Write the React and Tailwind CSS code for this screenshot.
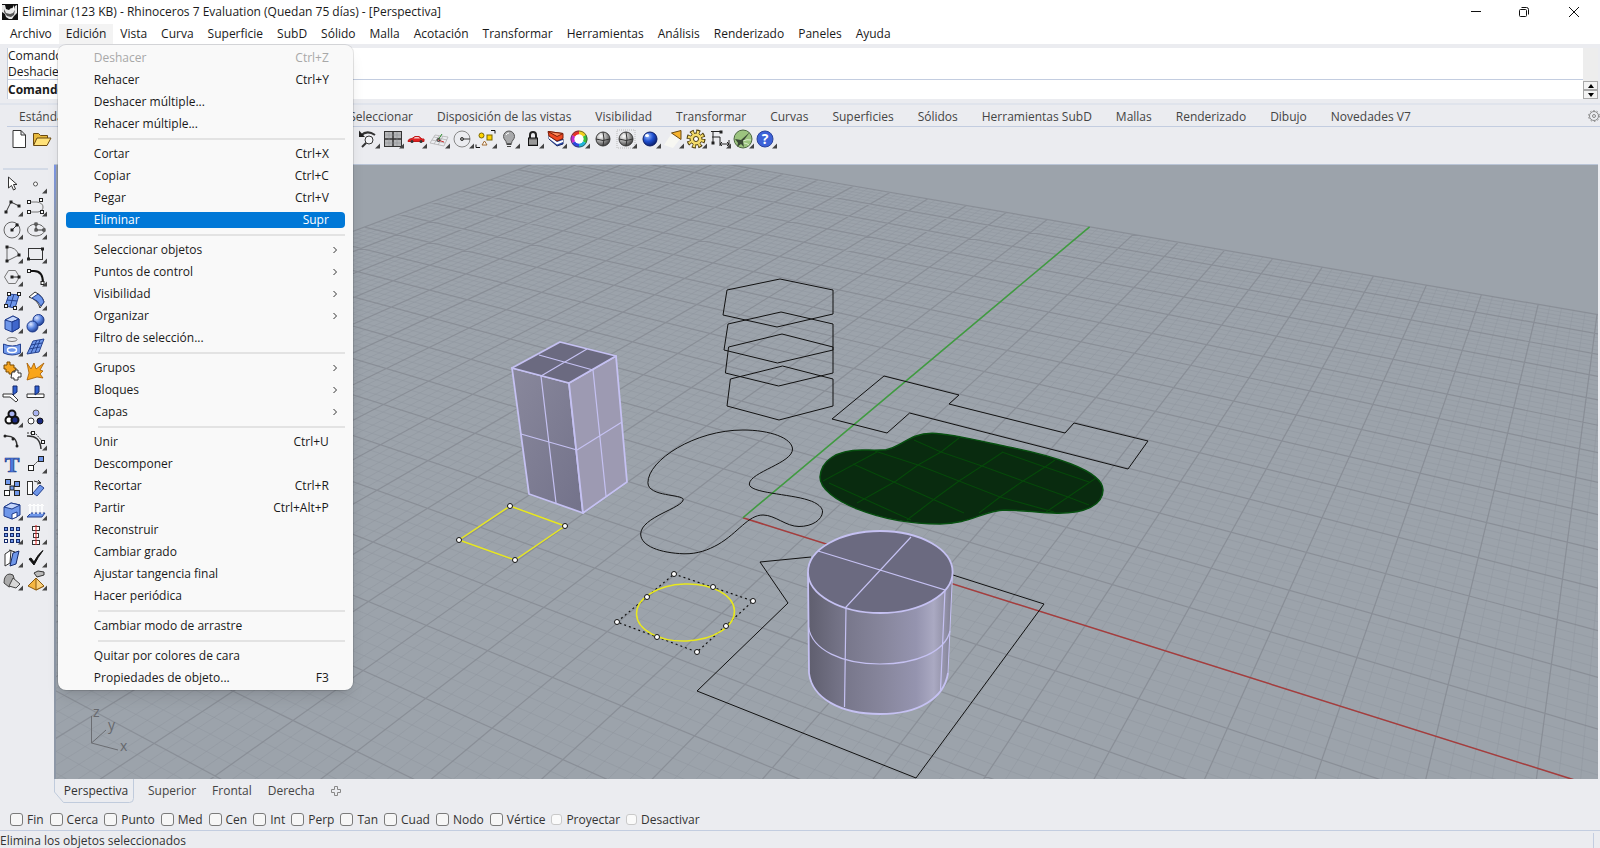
// src/App.jsx
import { useState } from 'react';
import {
    Save,
    Printer,
    FilePlus,
    Scissors,
    Copy,
    Clipboard,
    Undo2,
    Hand,
    Rotate3d,
    ZoomIn,
    Maximize,
    Search,
    Focus,
} from 'lucide-react';

const menus = [
    'Archivo', 'Edición', 'Vista', 'Curva', 'Superficie', 'SubD', 'Sólido', 'Malla', 'Acotación',
    'Transformar', 'Herramientas', 'Análisis', 'Renderizado', 'Paneles', 'Ayuda',
];

// Edit menu, one array per separated group
const editMenu = [
    [
        { name: 'Deshacer', keys: 'Ctrl+Z', disabled: true },
        { name: 'Rehacer', keys: 'Ctrl+Y' },
        { name: 'Deshacer múltiple...' },
        { name: 'Rehacer múltiple...' },
    ],
    [
        { name: 'Cortar', keys: 'Ctrl+X' },
        { name: 'Copiar', keys: 'Ctrl+C' },
        { name: 'Pegar', keys: 'Ctrl+V' },
        { name: 'Eliminar', keys: 'Supr', active: true },
    ],
    [
        { name: 'Seleccionar objetos', sub: true },
        { name: 'Puntos de control', sub: true },
        { name: 'Visibilidad', sub: true },
        { name: 'Organizar', sub: true },
        { name: 'Filtro de selección...' },
    ],
    [
        { name: 'Grupos', sub: true },
        { name: 'Bloques', sub: true },
        { name: 'Capas', sub: true },
    ],
    [
        { name: 'Unir', keys: 'Ctrl+U' },
        { name: 'Descomponer' },
        { name: 'Recortar', keys: 'Ctrl+R' },
        { name: 'Partir', keys: 'Ctrl+Alt+P' },
        { name: 'Reconstruir' },
        { name: 'Cambiar grado' },
        { name: 'Ajustar tangencia final' },
        { name: 'Hacer periódica' },
    ],
    [{ name: 'Cambiar modo de arrastre' }],
    [{ name: 'Quitar por colores de cara' }, { name: 'Propiedades de objeto...', keys: 'F3' }],
];

const toolTabs = [
    'Estándar', 'PlanosC', 'Establecer vista', 'Visualizar', 'Seleccionar', 'Disposición de las vistas',
    'Visibilidad', 'Transformar', 'Curvas', 'Superficies', 'Sólidos', 'Herramientas SubD', 'Mallas',
    'Renderizado', 'Dibujo', 'Novedades V7',
];

const snaps = ['Fin', 'Cerca', 'Punto', 'Med', 'Cen', 'Int', 'Perp', 'Tan', 'Cuad', 'Nodo', 'Vértice'];

function Glyph({ children, tri = true }) {
    return (
        <svg viewBox="0 0 24 24" className="h-6 w-6 shrink-0" fill="none" stroke="#333" strokeWidth="1">
            {children}
            {tri && <path d="M23 16.500v5h-5z" fill="#444" stroke="none" />}
        </svg>
    );
}

const Sq = ({ x, y, s = 3, fill = '#fff', stroke = '#222' }) => (
    <rect x={x - s / 2} y={y - s / 2} width={s} height={s} fill={fill} stroke={stroke} />
);

function Sphere({ x, y, r, dark, mid, light, id }) {
    return (
        <>
            <radialGradient id={id} cx="0.35" cy="0.3" r="0.75">
                <stop offset="0" stopColor={light} />
                <stop offset="0.5" stopColor={mid} />
                <stop offset="1" stopColor={dark} />
            </radialGradient>
            <circle cx={x} cy={y} r={r} fill={`url(#${id})`} stroke={dark} />
        </>
    );
}

const hiddenTools = [
    ['Guardar', Save], ['Imprimir', Printer], ['Propiedades', FilePlus], ['Cortar', Scissors], ['Copiar', Copy],
    ['Pegar', Clipboard], ['Deshacer', Undo2], ['Desplazar', Hand], ['Rotar vista', Rotate3d],
    ['Zoom dinámico', ZoomIn], ['Zoom ventana', Search], ['Zoom extensión', Maximize], ['Zoom selección', Focus],
];

const topTools = [
    ['Nuevo', false, <path d="M6 3.500h8l4.500 4.500v12.500H6zM14 3.500V8h4.500" fill="#fff" />],
    ['Abrir', false, (
        <>
            <path d="M3.500 18V6.500h5l2 2h7V11" fill="#e8b93c" stroke="#6b4a10" />
            <path d="M3.500 18.500L7 11h14l-4 7.500z" fill="#ffe27a" stroke="#6b4a10" />
        </>
    )],
    ...hiddenTools.map(([name, Icon]) => [name, false, <Icon key={name} x="4" y="4" width="15" height="15" />]),
    ['Zoom anterior', true, (
        <>
            <path d="M4 8.500Q10 2.500 18 8" strokeWidth="2" />
            <path d="M2 3.500v6.500h6z" fill="#222" stroke="none" />
            <circle cx="12" cy="13" r="4" fill="#f4f5f8" />
            <path d="M9 16l-4 4" strokeWidth="2" />
        </>
    )],
    ['Cuatro vistas', true, (
        <>
            <rect x="3.500" y="4.500" width="17" height="15" fill="#b5b6b8" />
            <path d="M12 4.500v15M3.500 12h17" strokeWidth="1.500" />
            <path d="M8 5v14M16 5v14M4 8h16M4 16h16" stroke="#8b8c90" strokeWidth="0.500" />
        </>
    )],
    ['Vista derecha', true, (
        <>
            <path d="M4 14q0-2 4-2.500l3-2h4l3 2.500h2v2.500H4z" fill="#e02020" stroke="#c01818" />
            <path d="M11 10h3.500l1.500 1.500H9.500z" fill="#f3c9c9" stroke="none" />
            <circle cx="8" cy="14.500" r="1.500" fill="#333" stroke="none" />
            <circle cx="17" cy="14.500" r="1.500" fill="#333" stroke="none" />
        </>
    )],
    ['Plano de construcción', true, (
        <>
            <path d="M3 16L8 8l13 2-4 9zM5 13l13 3M7 10l13 3M12 9l-5 8M16 9l-5 9" stroke="#aaa" strokeWidth="0.700" />
            <path d="M11 13l4-6" stroke="#2a8a2a" />
            <path d="M11 13l6 2" stroke="#c33" />
            <circle cx="11.500" cy="13" r="1.500" />
        </>
    )],
    ['Radio', true, (
        <>
            <circle cx="11" cy="12" r="8" stroke="#888" />
            <path d="M11 12h8" />
            <circle cx="11" cy="12" r="1.500" fill="#999" />
        </>
    )],
    ['Selección', true, (
        <>
            <circle cx="7.500" cy="8.500" r="2.500" fill="#ffd400" stroke="#7a6600" />
            <rect x="13" y="8" width="5" height="5" fill="#ffd400" stroke="#7a6600" />
            <path d="M10.500 14l2.500 4H8z" stroke="#a06a30" fill="#fff" />
            <path d="M17 3.500h4v3M6 20.500H2v-3" stroke="#111" />
        </>
    )],
    ['Ocultar', true, (
        <>
            <path d="M12 4a5.500 5.500 0 0 1 5.500 5.500c0 3-3 4-3 7h-5c0-3-3-4-3-7A5.500 5.500 0 0 1 12 4z" fill="#a8a9ab" stroke="#555" />
            <path d="M9.500 17.500h5M10 19.500h4" stroke="#444" />
            <path d="M9 8q1-2 3-2" stroke="#fff" />
        </>
    )],
    ['Bloquear', true, (
        <>
            <path d="M9 11V8a3 3 0 0 1 6 0v3" strokeWidth="2" stroke="#222" />
            <rect x="7.500" y="11" width="9" height="7.500" fill="#777" stroke="#111" />
            <path d="M8 14h8M8 16h8" stroke="#bbb" />
        </>
    )],
    ['Capas', true, (
        <>
            <path d="M5 12l8 7 6-2v-5l-6 2-8-6z" fill="#2c4cae" stroke="#1b2b66" />
            <path d="M5 9l8 6 6-2v2l-6 2.500-8-6z" fill="#fff" stroke="none" />
            <path d="M4 4.500l15 2v5l-6 2.500-8-5z" fill="#ef4a22" stroke="#7c1f0a" />
            <path d="M4 4.500l9 5 6-3z" fill="#ff8a5c" stroke="#7c1f0a" />
        </>
    )],
    ['Color', true, (
        <g strokeWidth="4">
            <path d="M12 5.500A6.500 6.500 0 0 1 17.600 8.800" stroke="#f2d21c" />
            <path d="M17.600 8.800A6.500 6.500 0 0 1 17.600 15.200" stroke="#35c23a" />
            <path d="M17.600 15.200A6.500 6.500 0 0 1 12 18.500" stroke="#1fb6d8" />
            <path d="M12 18.500A6.500 6.500 0 0 1 6.400 15.200" stroke="#2b48e0" />
            <path d="M6.400 15.200A6.500 6.500 0 0 1 6.400 8.800" stroke="#c22bd0" />
            <path d="M6.400 8.800A6.500 6.500 0 0 1 12 5.500" stroke="#e8322a" />
            <circle cx="12" cy="12" r="8" stroke="#444" strokeWidth="0.700" />
            <circle cx="12" cy="12" r="4.500" fill="#fff" stroke="none" />
        </g>
    )],
    ['Sombreado', false, (
        <>
            <Sphere id="sp1" x={12} y={12} r={7} light="#fff" mid="#a8a8a8" dark="#3a3a3a" />
            <path d="M5 12q7 3 14 0M12 5q2 7 0 14" stroke="#333" />
        </>
    )],
    ['Renderizado', true, (
        <>
            <rect x="3" y="3" width="18" height="18" stroke="#bbb" strokeDasharray="1 1" />
            <Sphere id="sp2" x={12} y={12} r={7} light="#fff" mid="#a8a8a8" dark="#3a3a3a" />
            <path d="M5 12q7 3 14 0M12 5q2 7 0 14" stroke="#333" />
        </>
    )],
    ['Render', true, (
        <>
            <Sphere id="sp3" x={12} y={12} r={7} light="#9dbcff" mid="#1e4fd0" dark="#0a1c66" />
            <ellipse cx="9" cy="8.500" rx="2" ry="1.500" fill="#fff" stroke="none" />
        </>
    )],
    ['Foco', true, (
        <>
            <path d="M11 6L3 18l9 3 7-9z" fill="#f7f7f2" stroke="none" />
            <path d="M10.500 6L20 3.500v9z" fill="#f6b22c" stroke="#6b4a10" />
        </>
    )],
    ['Opciones', true, (
        <>
            <circle cx="12" cy="12" r="7" stroke="#4a3a0c" strokeWidth="5" strokeDasharray="3.500 2" />
            <circle cx="12" cy="12" r="6" fill="#f4dc6b" stroke="#4a3a0c" />
            <circle cx="12" cy="12" r="6.800" stroke="#f4dc6b" strokeWidth="3.200" strokeDasharray="2.100 3.240" strokeDashoffset="-0.700" />
            <circle cx="12" cy="12" r="2.500" fill="#fff" stroke="#4a3a0c" />
        </>
    )],
    ['Acotación', true, (
        <>
            <path d="M5 4v12M3 4.500h11M4 10h8M12 10v9M21 13v7M12 17h9" stroke="#222" />
            <Sq x={13} y={5} s={2} fill="#222" />
            <Sq x={5} y={16} s={2} fill="#222" />
            <path d="M14 15l-2 2 2 2M19 15l2 2-2 2" stroke="#222" />
        </>
    )],
    ['Grasshopper', true, (
        <>
            <circle cx="12" cy="12" r="9" fill="#9cc47f" stroke="#4c6640" />
            <path d="M4 12l6 1 9-8-6 8-1 2 1 5-3-3-4 3 1-4z" fill="#3b4a36" stroke="none" />
            <path d="M12 14q4-2 8-1M13 16q3 0 5 2" stroke="#dcefcf" />
        </>
    )],
    ['Ayuda', true, (
        <>
            <circle cx="11" cy="12" r="8" fill="#3d62d8" stroke="#2b439c" />
            <text x="11" y="17" textAnchor="middle" fontSize="14" fontWeight="bold" fill="#fff" stroke="none">?</text>
        </>
    )],
];

const B = '#6f97ea';
const BL = '#c5d6fb';

const sideTools = [
    ['Seleccionar', false, <path d="M8.500 5v11l3-2.500 2 4.500 2-1-2-4.500h3.500z" fill="#fff" />],
    ['Punto', true, <circle cx="11.500" cy="12" r="2" fill="#fff" stroke="#555" />],
    ['Polilínea', true, (
        <>
            <path d="M6 17L11 7l8 4" />
            <Sq x={6} y={17} s={2} fill="#222" /><Sq x={11} y={7} s={2} fill="#222" /><Sq x={19} y={11} s={2} fill="#222" />
        </>
    )],
    ['Curva', true, (
        <>
            <path d="M5 7h8q6 1 6 5t-5 5H5" stroke="#777" />
            <Sq x={5} y={7} /><Sq x={5} y={17} /><Sq x={17} y={5} /><Sq x={18} y={17} />
        </>
    )],
    ['Círculo', true, (
        <>
            <circle cx="12" cy="12" r="8" stroke="#666" />
            <path d="M12 12l5-5" />
            <Sq x={12} y={12} s={2} fill="#222" /><Sq x={17} y={7} s={2} fill="#222" />
        </>
    )],
    ['Elipse', true, (
        <>
            <ellipse cx="12" cy="12" rx="8.500" ry="6" stroke="#666" />
            <path d="M12 6v6h8" />
            <Sq x={12} y={6} s={2} /><Sq x={12} y={12} s={2} /><Sq x={20} y={12} s={2} />
        </>
    )],
    ['Arco', true, (
        <>
            <path d="M7 5q9 0 12 8M7 5v14l12-6" stroke="#666" />
            <Sq x={7} y={5} s={2} fill="#222" /><Sq x={7} y={19} s={2} fill="#222" /><Sq x={19} y={13} s={2} fill="#222" />
        </>
    )],
    ['Rectángulo', true, (
        <>
            <rect x="4.500" y="6.500" width="14" height="11" />
            <Sq x={4.5} y={17} s={2} fill="#222" /><Sq x={18.5} y={7} s={2} fill="#222" />
        </>
    )],
    ['Polígono', true, (
        <>
            <path d="M8.500 5.500h7l4 6.500-4 6.500h-7L4.500 12z" stroke="#777" />
            <path d="M12 12h7" />
            <Sq x={12} y={12} s={2} fill="#222" /><Sq x={19} y={12} s={2} fill="#222" />
        </>
    )],
    ['Empalmar', true, (
        <>
            <path d="M5 6h5q9 0 9 12" strokeWidth="2" stroke="#111" />
            <Sq x={5} y={6} /><Sq x={18.5} y={18} />
        </>
    )],
    ['Superficie por puntos', true, (
        <>
            <path d="M9 5l10 1-4 13-10-2z" fill={B} stroke="#24418f" />
            <path d="M7 11l10 1M14 5l-4 13" stroke="#24418f" />
            <Sq x={9} y={5} /><Sq x={19} y={5} /><Sq x={15} y={19} /><Sq x={6} y={17} />
        </>
    )],
    ['Barrido', true, (
        <>
            <path d="M5 8l6-5q8 4 9 10l-4 6q-2-8-11-11z" fill="#fff" />
            <path d="M8 9l6-4q5 3 6 8l-3 4q-3-6-9-8z" fill={B} stroke="#24418f" />
        </>
    )],
    ['Caja', true, (
        <>
            <path d="M5 8l8-4 6 3v9l-7 4-7-3z" fill={B} stroke="#1e3a8a" />
            <path d="M5 8l8-4 6 3-7 3z" fill={BL} stroke="#1e3a8a" />
            <path d="M12 10l7-3v9l-7 4z" fill="#3f66cc" stroke="#1e3a8a" />
        </>
    )],
    ['Booleana', true, (
        <>
            <Sphere id="s1" x={14.5} y={8} r={5.5} light="#dfe8ff" mid="#5e88e2" dark="#1e3a8a" />
            <Sphere id="s2" x={8.5} y={14.5} r={5.5} light="#dfe8ff" mid="#5e88e2" dark="#1e3a8a" />
        </>
    )],
    ['Proyectar', true, (
        <>
            <ellipse cx="12" cy="4.500" rx="5" ry="2" stroke="#777" />
            <path d="M3.500 9q9 4 17 0v9q-8 4-17 0z" fill={B} stroke="#24418f" />
            <ellipse cx="12" cy="15" rx="4.500" ry="2.500" fill={B} stroke="#fff" strokeWidth="1.500" />
        </>
    )],
    ['Malla', true, (
        <>
            <path d="M9 6l11-2-5 13-12 2z" fill={B} stroke="#24418f" />
            <path d="M7 10l11-2M5 14l11-2M13 5L7 18M16 5l-5 13" stroke="#24418f" />
        </>
    )],
    ['Unir', false, (
        <>
            <path d="M4 6h3V3h3v3h4v3h2v3h-3v3H9v-2H6v-3H4z" fill="#f5a623" stroke="#7a4a00" strokeLinejoin="round" />
            <path d="M12 13h3v-2h3v3h3v4h-3v3h-4v-2h-3z" fill="#fff" strokeLinejoin="round" />
        </>
    )],
    ['Descomponer', false, (
        <path d="M3 4l4 6 3-6 2 6 8-6-4 7 3 1-3 3 3 4-6-1-10 3 2-7z" fill="#f9a51b" stroke="#a35a00" strokeWidth="0.800" />
    )],
    ['Recortar', false, (
        <>
            <path d="M3 12h9l6 6-2 2-6-5H3z" fill="#fff" />
            <path d="M13 4v9l4-3V4z" fill="#2f5fd0" stroke="#14296b" />
        </>
    )],
    ['Partir', false, (
        <>
            <path d="M3 12h17v3.500H3z" fill="#fff" />
            <path d="M11 4v9l4-3V4z" fill="#2f5fd0" stroke="#14296b" />
        </>
    )],
    ['Agrupar', true, (
        <g strokeWidth="2" stroke="#111">
            <circle cx="12" cy="8" r="3.500" fill="#a9b4f2" />
            <circle cx="9" cy="14" r="3.500" fill="#fff" />
            <circle cx="15" cy="14" r="3.500" fill="#1b2a80" />
        </g>
    )],
    ['Desagrupar', false, (
        <>
            <circle cx="12" cy="7" r="3" fill="#a9b4f2" stroke="#555" />
            <circle cx="7" cy="15" r="3" fill="#fff" />
            <circle cx="16" cy="15" r="3" fill="#1b2a80" stroke="#111" />
        </>
    )],
    ['Editar puntos', false, (
        <>
            <path d="M5 7q12-1 12 11" strokeWidth="1.500" />
            <circle cx="5" cy="7" r="1.500" fill="#222" stroke="none" />
            <circle cx="13" cy="10" r="1.500" fill="#222" stroke="none" />
            <circle cx="17" cy="17" r="1.500" fill="#222" stroke="none" />
        </>
    )],
    ['Puntos de control', true, (
        <>
            <path d="M3 7q13-1 14 13" strokeWidth="1.500" />
            <path d="M3 4h8l8 9" strokeDasharray="2 1" />
            <Sq x={9} y={4} /><Sq x={19} y={13} />
        </>
    )],
    ['Texto', false, (
        <text x="12" y="20" textAnchor="middle" fontSize="22" fontWeight="bold" fontFamily="Liberation Serif, serif" fill="#4d7ae0" stroke="#1e3a8a" strokeWidth="0.700">T</text>
    )],
    ['Mover', true, (
        <>
            <path d="M8 15l7-7" strokeDasharray="2 1" />
            <Sq x={7} y={16} s={5} /><Sq x={17} y={7} s={5} fill={B} />
        </>
    )],
    ['Copiar', false, (
        <>
            <Sq x={8} y={6} s={5} fill={B} /><Sq x={17} y={8} s={5} fill={B} /><Sq x={12} y={12} s={4} fill={B} />
            <Sq x={7} y={17} s={5} /><Sq x={17} y={17} s={5} fill={B} />
        </>
    )],
    ['Rotar', false, (
        <>
            <rect x="3.500" y="5.500" width="5" height="13" fill="#fff" />
            <path d="M16 9l4 3-7 8-4-3z" fill={B} stroke="#24418f" />
            <path d="M10 5l7 2M14 4l3 3-4 1" />
        </>
    )],
    ['Editar sólido', true, (
        <>
            <path d="M4 8l7-4 9 2v10l-8 4-8-3z" fill={B} stroke="#1e3a8a" />
            <path d="M4 8l7-4 9 2-8 4z" fill={BL} stroke="#1e3a8a" />
            <path d="M12 20v-5l5-2v5z" fill="#fff" stroke="#1e3a8a" />
        </>
    )],
    ['Extruir', true, (
        <>
            <path d="M3 18l4-4h14l-3 4z" fill={B} stroke="#24418f" />
            <path d="M6 15V5M10 15V5M14 15V5M18 15V5" stroke="#fff" strokeWidth="1.500" />
            <path d="M4 7l2-2 2 2M8 7l2-2 2 2M12 7l2-2 2 2M16 7l2-2 2 2" stroke="#fff" />
        </>
    )],
    ['Matriz', true, (
        <>
            {[6, 12, 18].map((x) => [6, 12, 18].map((y) => (
                <Sq key={`${x}-${y}`} x={x} y={y} s={3} fill={x === 6 && y === 18 ? '#fff' : B} stroke="#14296b" />
            )))}
        </>
    )],
    ['Alinear', true, (
        <>
            <rect x="8.500" y="3.500" width="7" height="4" fill="#fff" />
            <rect x="9.500" y="10.500" width="5" height="4" fill="#fff" />
            <rect x="8.500" y="17.500" width="7" height="4" fill="#fff" />
            <path d="M12 2v20" stroke="#e02020" />
        </>
    )],
    ['Desplegar', true, (
        <>
            <path d="M5 8l6-4-1 13-5 3z" fill="#fff" />
            <path d="M13 7l6-2-3 13-6 2z" fill={B} stroke="#14296b" />
            <path d="M9 4l6 2" />
        </>
    )],
    ['Comprobar', true, <path d="M5 13l2-1 3 4Q14 8 19 4.500 14 11 10 19z" fill="#111" stroke="#111" />],
    ['Sólidos', true, (
        <>
            <path d="M4 14q0-9 6-9 4 0 4 4v7l-5 2z" fill="#aaa" stroke="#444" />
            <path d="M9 17l4-8 7 6-4 4z" fill="#d8d8d8" stroke="#444" />
        </>
    )],
    ['Manipular', true, (
        <>
            <path d="M12 9l8 8-8 4-8-4z" fill="#f5b642" stroke="#8a5a10" />
            <path d="M12 9v12l8-4z" fill="#f9cf7a" stroke="#8a5a10" />
            <path d="M10 4l4-2 6 1v3l-7 2z" fill="#bbb" stroke="#333" />
        </>
    )],
];

// Perspective projection of the construction plane, one unit = one major grid square
function project(u, v) {
    const w = 1 - 0.0244 * u + 0.0425 * v;
    return [(41.97 * u + 71.07 * v + 742.9) / w, (6.31 * u - 11.13 * v + 517.7) / w];
}

function gridPath(major) {
    const parts = [];
    for (let i = -70; i <= 70; i++) {
        if ((i % 5 === 0) !== major) continue;
        const k = i / 5;
        // stay in front of the camera
        const vMin = Math.max(-14, (0.3 - 1 + 0.0244 * k) / 0.0425);
        const lines = [[project(k, vMin), project(k, 14)], [project(-14, k), project(14, k)]];
        lines.forEach(([a, b]) => {
            parts.push(`M${a[0].toFixed(1)} ${a[1].toFixed(1)}L${b[0].toFixed(1)} ${b[1].toFixed(1)}`);
        });
    }
    return parts.join('');
}

const blob = 'M820 477C821 461 836 450 862 450 870 450 878 450.500 886 449.700 902 447 909 433.300 932 433.300 950 433.500 980 441 1007 446.700 1050 455 1103 470 1103 490 1103 505 1085 513.500 1057 513.200 1040 513 1022 510 1005 510 982 511 970 524 940 524 880 524 820 500 820 477Z';

const handles = [
    [510, 506], [565, 526], [515, 560], [459, 540],
    [674, 574], [713, 587], [753, 601], [726, 626], [697, 652], [657, 637], [617, 622], [647, 597],
];

function Viewport() {
    return (
        <svg viewBox="54 165 1544 614" preserveAspectRatio="xMinYMin slice" className="absolute inset-0 h-full w-full" fill="none">
            <defs>
                <linearGradient id="cyl" x1="0" x2="1" y1="0" y2="0">
                    <stop offset="0" stopColor="#5f5e6e" />
                    <stop offset="0.25" stopColor="#77768a" />
                    <stop offset="0.5" stopColor="#86859b" />
                    <stop offset="0.75" stopColor="#9594af" />
                    <stop offset="0.87" stopColor="#aaa9c2" />
                    <stop offset="0.95" stopColor="#9190a6" />
                    <stop offset="1" stopColor="#7d7c90" />
                </linearGradient>
                <linearGradient id="face" x1="0" x2="1" y1="0" y2="1">
                    <stop offset="0" stopColor="#89889c" />
                    <stop offset="1" stopColor="#73728a" />
                </linearGradient>
                <clipPath id="blobClip"><path d={blob} /></clipPath>
            </defs>
            <path d={gridPath(false)} stroke="#8f959d" strokeWidth="1" opacity="0.45" />
            <path d={gridPath(true)} stroke="#868b93" strokeWidth="1.200" opacity="0.85" />
            <path d="M742.900 517.700L1600 788" stroke="#a63c3c" strokeWidth="1.500" />
            <path d="M742.900 517.700L1089.600 226.900" stroke="#3f9c3f" strokeWidth="1.500" />

            {/* Wireframe curves */}
            <g stroke="#111" strokeWidth="1">
                <path d="M727 290L780 279 833 290V314L777 327 723 315Z" />
                <path d="M728 324L781 312 833 324V350L777.500 363 724 350Z" />
                <path d="M728.600 347L782 334 833 347V373L778.600 386 725.400 373Z" />
                <path d="M730.400 379L782.500 366 833 379V406L779 420 727 406Z" />
                <path d="M884 376L959 395 949 404 1065 433 1074 423 1148 441 1128 469 909.600 413 887 433 832 419Z" />
                <path d="M743 430C770 430 792 438 792.500 449 793 463 750 472 749.300 484 749 493 790 494 808 500 818 503 823 508 822.500 512 822 520 812 526.500 799 526.500 786 526.500 775 515 763 515 748 515 738 533 718 544.500 708 550 698 554 684 553.800 660 553 640.700 546 640.700 534 641 517 683 508 683.200 499.500 683 494 648 497 647.900 482.700 648 460 695 430 743 430Z" />
                <path d="M811 557L760 562 788 603 697 691 916 778 1044 604 953 575" />
            </g>

            {/* Trimmed surface */}
            <path d={blob} fill="#092b0f" stroke="#075010" strokeWidth="1.500" />
            <g clipPath="url(#blobClip)" stroke="#06480a" strokeWidth="1.200">
                <path d="M829 483L911 520M853 464L964 513M875 451L918 465 959 481 1000 497 1054 512M914 440L941 452 982 466 1023 481 1068 497 1089 505M1002 452L1045 467 1089 482" />
                <path d="M823 481L877 452M857 503L896 481 918 465 941 452 959 438M907 520L937 497 959 481 982 466 1003 452M979 513L1000 497 1023 481 1045 467 1055 460M1046 512L1068 497 1096 478" />
            </g>

            {/* Box */}
            <g strokeLinejoin="round" stroke="#c5c1f2" strokeWidth="1.800">
                <path d="M512 368L569 383 583 513 529 494Z" fill="url(#face)" />
                <path d="M569 383L616 356 627 482 583 513Z" fill="#9d9ab2" />
                <path d="M512 368L560 342 616 356 569 383Z" fill="#6b6a80" />
                <path d="M539 355L593 370 606 496M587 349L541 376 556 503M521 434L577 450 622 422" strokeWidth="1.200" />
            </g>

            {/* Cylinder */}
            <path d="M808 572L809 673C812 698 840 714 880 714 918 714 944 699 948 673L952.600 572Z" fill="url(#cyl)" />
            <g stroke="#c5c1f2" strokeWidth="1.800">
                <path d="M808 572L809 673C812 698 840 714 880 714 918 714 944 699 948 673" />
                <ellipse cx="880.300" cy="572" rx="72.300" ry="41" fill="#6b6a80" />
                <path d="M948 673L952.600 572" strokeWidth="1" />
                <path d="M818 551L945 590 940.500 690M911 537L846 607 844.500 707M808.500 627C812 650 842 664 880 664 916 664 945 652 950 631" strokeWidth="1.200" />
            </g>

            {/* Selected curves and their control points */}
            <path d="M510 506L565 526 515 560 459 540Z" stroke="#e8e81e" strokeWidth="1.500" />
            <path d="M674 574L753 601 697 652 617 622Z" stroke="#111" strokeWidth="1.200" strokeDasharray="2 3" />
            <ellipse cx="685.500" cy="612.500" rx="49" ry="28.500" stroke="#e8e81e" strokeWidth="1.500" transform="rotate(-2 685.500 612.500)" />
            {handles.map(([x, y]) => (
                <circle key={`${x}-${y}`} cx={x} cy={y} r="2.500" fill="#fff" stroke="#111" />
            ))}

            {/* World axes */}
            <path d="M91.500 716V743L118 750M91.500 743L106 730" stroke="#6b6d72" />
            <g fill="#66686d" fontSize="14">
                <text x="93" y="717">z</text>
                <text x="108" y="730">y</text>
                <text x="120" y="751">x</text>
            </g>
        </svg>
    );
}

function EditMenu() {
    return (
        <div className="absolute top-full -left-px z-20 mt-px flex w-[295px] flex-col gap-[6px] rounded-lg bg-[#f9f9f9] px-2 pt-[5px] pb-1 shadow-lg ring-1 ring-black/10">
            {editMenu.map((group, i) => (
                <div key={group[0].name} className="flex flex-col gap-[6px]">
                    {i > 0 && <hr className="ml-8 h-0.5 border-0 bg-[#e3e3e3]" />}
                    {group.map((item) => (
                        <button
                            key={item.name}
                            disabled={item.disabled}
                            className={`flex h-4 items-center justify-between rounded-sm pr-4 pl-7 text-left leading-4
                                ${item.active ? 'bg-[#0078d7] text-white' : item.disabled ? 'text-[#a8a8a8]' : 'text-[#1a1a1a]'}`}
                        >
                            <span>{item.name}</span>
                            {item.keys && <span>{item.keys}</span>}
                            {item.sub && (
                                <svg viewBox="0 0 8 8" className="-mr-2.5 h-2 w-2" fill="none" stroke="#333">
                                    <path d="M2.500 1l3 3-3 3" />
                                </svg>
                            )}
                        </button>
                    ))}
                </div>
            ))}
        </div>
    );
}

export default function App() {
    const [checked, setChecked] = useState({});
    const toggle = (name) => setChecked({ ...checked, [name]: !checked[name] });

    return (
        <div className="flex min-h-screen flex-col bg-[#ebecf0] font-['Open_Sans','Noto_Sans',sans-serif] text-[12px] leading-4 text-[#1a1a1a]">
            {/* Title bar */}
            <header className="flex h-6 items-center bg-white pl-0.5">
                <svg viewBox="0 0 16 16" className="mr-1 h-4 w-4">
                    <path d="M0 0h16v16H0z" fill="#111" />
                    <path d="M0 1h3l1 4 3 1 2-2 3 1 1-3 2-1v8l-3 3-2 3H7L4 13l-1-3-3-2z" fill="#e6e6e6" />
                    <path d="M2 5l2 4 4 1 3-1 2-3-1 5-3 2-4-1-3-4z" fill="#555" />
                    <path d="M10 5l2-4v5z" fill="#fff" />
                </svg>
                <h1 className="flex-1">Eliminar (123 KB) - Rhinoceros 7 Evaluation (Quedan 75 días) - [Perspectiva]</h1>
                <div className="flex">
                    <button aria-label="Minimizar" className="flex w-12 justify-center">
                        <svg viewBox="0 0 12 12" className="h-3 w-3" fill="none" stroke="#111"><path d="M1 5.500h10" /></svg>
                    </button>
                    <button aria-label="Restaurar" className="flex w-12 justify-center">
                        <svg viewBox="0 0 12 12" className="h-3 w-3" fill="none" stroke="#111">
                            <rect x="1.500" y="3.500" width="7" height="7" rx="1" />
                            <path d="M3.500 1.500h5q2 0 2 2v5" />
                        </svg>
                    </button>
                    <button aria-label="Cerrar" className="flex w-[52px] justify-center">
                        <svg viewBox="0 0 12 12" className="h-3 w-3" fill="none" stroke="#111"><path d="M1 1l10 10M11 1L1 11" /></svg>
                    </button>
                </div>
            </header>

            {/* Menu bar */}
            <nav className="flex h-5 bg-white pl-[3px]">
                {menus.map((name) => (
                    <div key={name} className="relative">
                        <button className={`h-5 px-[7px] ${name === 'Edición' ? 'bg-[#f3f3f3]' : ''}`}>{name}</button>
                        {name === 'Edición' && <EditMenu />}
                    </div>
                ))}
            </nav>

            {/* Command history and prompt */}
            <section className="flex pt-1 pl-[7px]">
                <div className="min-w-0 flex-1 border-l border-[#c3ccdb] bg-white">
                    <div className="h-8 border-b border-[#c3cde0]">
                        <p>Comando: _Undo</p>
                        <p>Deshaciendo Eliminar</p>
                    </div>
                    <label className="flex h-[19px] items-center font-bold">
                        Comando:
                        <input className="flex-1 font-normal outline-none" />
                    </label>
                </div>
                <div className="mr-0.5 flex w-[15px] flex-col">
                    <div className="flex-1 bg-[#ededed]" />
                    <button aria-label="Subir" className="flex h-[9px] items-center justify-center border border-[#a9a9a9] bg-[#f3f3f3]">
                        <svg viewBox="0 0 6 4" className="h-1 w-1.5"><path d="M3 0l3 4H0z" /></svg>
                    </button>
                    <button aria-label="Bajar" className="flex h-[9px] items-center justify-center border border-[#a9a9a9] bg-[#f3f3f3]">
                        <svg viewBox="0 0 6 4" className="h-1 w-1.5"><path d="M3 4l3-4H0z" /></svg>
                    </button>
                </div>
            </section>

            {/* Tool tabs */}
            <section className="mt-1 border-t-2 border-[#e0e4ec] pl-[7px]">
                <div className="flex h-[22px] items-end gap-6 border-b border-[#c3cde0] pl-3 text-[#444]">
                    {toolTabs.map((name) => (
                        <button key={name} className="h-[18px] whitespace-nowrap">{name}</button>
                    ))}
                    <button aria-label="Opciones de barra" className="mb-1 ml-auto">
                        <svg viewBox="0 0 12 12" className="h-3 w-3" fill="none" stroke="#888">
                            <circle cx="6" cy="6" r="4.500" />
                            <circle cx="6" cy="6" r="5.500" strokeDasharray="1.500 2" />
                            <circle cx="6" cy="6" r="1.500" />
                        </svg>
                    </button>
                </div>
            </section>
            <div className="h-[37px] pl-[7px]">
                <div className="grid w-[771px] auto-cols-fr grid-flow-col">
                    {topTools.map(([name, tri, art], i) => (
                        <button key={i} aria-label={name} className="flex justify-center">
                            <Glyph tri={tri}>{art}</Glyph>
                        </button>
                    ))}
                </div>
            </div>

            {/* Side toolbar and viewport */}
            <main className="flex flex-1">
                <aside className="w-[54px] pt-1">
                    <div className="mr-1.5 ml-[3px] h-0.5 bg-[#d3dae6]" />
                    <div className="mt-0.5 grid h-[421px] w-12 auto-rows-fr grid-cols-2">
                        {sideTools.map(([name, tri, art]) => (
                            <button key={name} aria-label={name} className="flex items-center">
                                <Glyph tri={tri}>{art}</Glyph>
                            </button>
                        ))}
                    </div>
                </aside>
                <div className="relative mr-0.5 flex-1 overflow-hidden border-t border-[#b9c4d6] bg-[#9ca3ab]">
                    <Viewport />
                    <div className="absolute inset-y-0 left-0 w-0.5 bg-linear-to-b from-[#7d97ea] to-[#8d97a6] to-10%" />
                </div>
            </main>

            {/* Viewport tabs */}
            <div className="flex h-6 items-center pl-[54px] text-[#333]">
                <div className="relative h-6 w-[80px]">
                    <svg viewBox="0 0 80 24" className="absolute inset-0 h-full w-full" fill="none" stroke="#c0cbdc">
                        <path d="M0.500 0v13l9 10.500h66q4 0 4-4V0" />
                    </svg>
                    <button className="relative w-full pt-1 pl-1">Perspectiva</button>
                </div>
                <div className="flex items-center gap-4 pl-3.5 text-[#444]">
                    <button>Superior</button>
                    <button>Frontal</button>
                    <button>Derecha</button>
                    <button aria-label="Nueva vista">
                        <svg viewBox="0 0 10 10" className="h-2.5 w-2.5" fill="none" stroke="#888">
                            <path d="M3.500 0.500h3v3h3v3h-3v3h-3v-3h-3v-3h3z" />
                        </svg>
                    </button>
                </div>
            </div>

            {/* Object snaps */}
            <div className="flex h-7 items-center gap-[6px] border-b border-[#c3cde0] pt-2 pb-0.5 pl-2.5 text-[#333]">
                {snaps.map((name) => (
                    <label key={name} className="flex items-center gap-1">
                        <input
                            type="checkbox"
                            checked={!!checked[name]}
                            onChange={() => toggle(name)}
                            className="h-[13px] w-[13px] appearance-none rounded-[3px] border border-[#7a7a7a] bg-[#f6f6f6] checked:bg-[#0078d7]"
                        />
                        {name}
                    </label>
                ))}
                {['Proyectar', 'Desactivar'].map((name) => (
                    <label key={name} className="flex items-center gap-1">
                        <input
                            type="checkbox"
                            checked={!!checked[name]}
                            onChange={() => toggle(name)}
                            className="h-[11px] w-[11px] appearance-none rounded-[3px] border border-[#c9c9c9] bg-[#fafafa] checked:bg-[#0078d7]"
                        />
                        {name}
                    </label>
                ))}
            </div>

            {/* Status bar */}
            <footer className="flex h-[17px] items-center justify-between pt-0.5 text-[#333]">
                <span>Elimina los objetos seleccionados</span>
                <span className="mr-1.5 h-full border-l border-[#c3cde0]" />
            </footer>
        </div>
    );
}
